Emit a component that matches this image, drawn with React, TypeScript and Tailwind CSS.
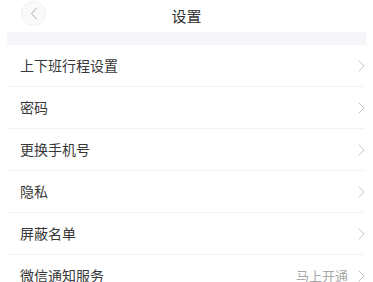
import React from "react";

const rows = [
  { label: "上下班行程设置" },
  { label: "密码" },
  { label: "更换手机号" },
  { label: "隐私" },
  { label: "屏蔽名单" },
  { label: "微信通知服务", extra: "马上开通" },
];

function Chevron() {
  return (
    <svg width="7" height="12" viewBox="0 0 7 12" fill="none">
      <path d="M1 1L6 6L1 11" stroke="#c4c4c4" strokeWidth="1" strokeLinecap="round" strokeLinejoin="round" />
    </svg>
  );
}

export default function App() {
  return (
    <div
      className="w-[373px] h-[282px] overflow-hidden bg-white text-[#333]"
      style={{ fontFamily: '"Noto Sans CJK SC", "Noto Sans", sans-serif' }}
    >
      <div className="relative h-[32px] flex items-center justify-center">
        <div className="absolute left-[21px] top-[1px] w-[25px] h-[25px] rounded-full bg-[#fafafa] border border-[#f0f0f0] flex items-center justify-center">
          <svg width="8" height="13" viewBox="0 0 8 13" fill="none">
            <path d="M6.5 1L1.5 6.5L6.5 12" stroke="#a8a8a8" strokeWidth="1" strokeLinecap="round" strokeLinejoin="round" />
          </svg>
        </div>
        <span className="text-[15px] leading-none mt-[-2px]">设置</span>
      </div>
      <div className="mx-[7px] h-[13px] bg-[#f5f5fa]" />
      <div className="mx-[8px]">
        {rows.map((r, i) => (
          <div
            key={i}
            className="h-[42px] flex items-center justify-between pl-[12px] pr-0 border-b border-[#f3f3f3]"
          >
            <span className="text-[14px] text-[#383838]">{r.label}</span>
            <div className="flex items-center gap-[10px]">
              {r.extra && <span className="text-[13px] text-[#a8a8a8]">{r.extra}</span>}
              <Chevron />
            </div>
          </div>
        ))}
      </div>
    </div>
  );
}
